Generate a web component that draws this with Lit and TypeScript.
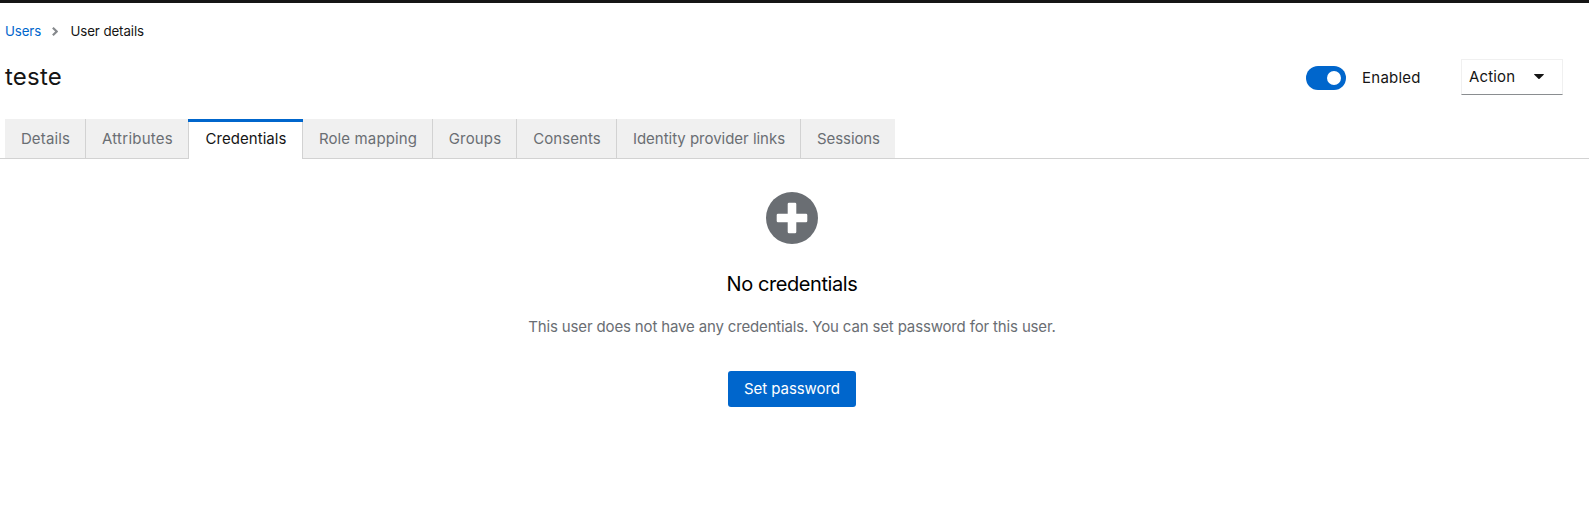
import { LitElement, html, css } from "lit";
import { customElement, state } from "lit/decorators.js";

interface Tab {
  label: string;
  width: number;
  spacing: number;
}

const TABS: Tab[] = [
  { label: "Details", width: 81, spacing: 0.15 },
  { label: "Attributes", width: 102, spacing: 0.24 },
  { label: "Credentials", width: 115, spacing: 0.04 },
  { label: "Role mapping", width: 130, spacing: 0.12 },
  { label: "Groups", width: 84, spacing: 0.15 },
  { label: "Consents", width: 100, spacing: 0.04 },
  { label: "Identity provider links", width: 184, spacing: -0.02 },
  { label: "Sessions", width: 94, spacing: -0.1 },
];

@customElement("app-root")
export class AppRoot extends LitElement {
  @state() private active = "Credentials";
  @state() private enabled = true;

  static styles = css`
    :host {
      display: block;
      box-sizing: border-box;
      height: 516px;
      overflow: hidden;
      background: #fff;
      border-top: 3px solid #151515;
      color: #151515;
      font-family: Inter, "Liberation Sans", sans-serif;
      font-size: 15px;
      font-weight: 400;
      line-height: 24px;
    }
    button {
      font: inherit;
      color: inherit;
      margin: 0;
      padding: 0;
      border: 0;
      background: none;
      white-space: nowrap;
    }
    svg { display: block; }
    .breadcrumb {
      display: flex;
      align-items: center;
      height: 20px;
      padding: 18px 0 0 5px;
      font-size: 13.3px;
      line-height: 20px;
      letter-spacing: -0.1px;
    }
    .breadcrumb a {
      width: 47px;
      color: #06c;
      text-decoration: none;
    }
    .crumb-arrow {
      width: 6px;
      height: 9px;
      margin-right: 12.5px;
      fill: #86898d;
    }
    .header {
      display: flex;
      height: 78px;
      padding-left: 5px;
    }
    h1 {
      flex: 1;
      margin: 0;
      padding-top: 20px;
      font-size: 24px;
      font-weight: 400;
      line-height: 31px;
      letter-spacing: 0.2px;
    }
    .switch {
      display: flex;
      align-items: center;
      height: 24px;
      margin-top: 25px;
      width: 155px;
      letter-spacing: 0.25px;
    }
    .track {
      box-sizing: border-box;
      width: 40px;
      height: 24px;
      padding: 5px;
      margin-right: 16px;
      border-radius: 12px;
      background: #8a8d90;
      display: flex;
    }
    .track.on {
      background: #06c;
      justify-content: flex-end;
    }
    .knob {
      width: 14px;
      height: 14px;
      border-radius: 50%;
      background: #fff;
    }
    .action {
      box-sizing: border-box;
      display: flex;
      align-items: center;
      width: 102px;
      height: 36px;
      margin: 18px 26px 0 0;
      padding: 0 18px 1px 7px;
      border: 1px solid #f0f0f0;
      border-bottom-color: #8a8d90;
      justify-content: space-between;
      letter-spacing: 0.15px;
    }
    .caret {
      width: 10px;
      height: 5px;
      fill: #151515;
    }
    .tabs {
      display: flex;
      height: 39px;
      padding-left: 5px;
      border-bottom: 1px solid #d2d2d2;
    }
    .tab {
      box-sizing: border-box;
      height: 39px;
      padding: 1px 0 0 1px;
      background: #f0f0f0;
      border-right: 1px solid #d2d2d2;
      color: #6a6e73;
    }
    .tab.before, .tab:last-child { border-right: 0; }
    .tab.active {
      height: 40px;
      display: grid;
      grid-template-rows: 3px 1fr;
      padding: 0;
      border: 0;
      background: #fff;
      color: #151515;
    }
    .accent { background: #06c; }
    .active .label {
      border: solid #d2d2d2;
      border-width: 0 1px;
      padding: 5px 0 0 1px;
    }
    .empty {
      display: flex;
      flex-direction: column;
      align-items: center;
      width: 1584px;
      padding-top: 33px;
    }
    .plus {
      width: 52px;
      height: 52px;
    }
    h2 {
      margin: 24px 0 0;
      font-size: 20px;
      font-weight: 400;
      line-height: 32px;
      letter-spacing: -0.42px;
      color: #000;
    }
    p {
      margin: 15px 0 0;
      color: #6a6e73;
      letter-spacing: -0.15px;
      white-space: nowrap;
    }
    .primary {
      width: 128px;
      height: 36px;
      margin-top: 32px;
      padding-bottom: 1px;
      border-radius: 3px;
      background: #06c;
      color: #fff;
      letter-spacing: -0.06px;
    }
  `;

  private tabClass(index: number) {
    if (TABS[index].label === this.active) return "tab active";
    return TABS[index + 1]?.label === this.active ? "tab before" : "tab";
  }

  private renderTab(tab: Tab, index: number) {
    const isActive = tab.label === this.active;
    return html`<button
      class=${this.tabClass(index)}
      role="tab"
      aria-selected=${isActive}
      style="width:${tab.width}px;letter-spacing:${tab.spacing}px"
      @click=${() => (this.active = tab.label)}
    >${isActive ? html`<span class="accent"></span>` : ""}<span class="label">${tab.label}</span></button>`;
  }

  render() {
    return html`
      <nav class="breadcrumb">
        <a href="#">Users</a>
        <svg class="crumb-arrow" viewBox="0 0 6 9"><path d="M1.6 0 5.8 4q.4.5 0 1L1.6 9 .1 7.6 3.2 4.5.1 1.4Z" /></svg>
        <span>User details</span>
      </nav>
      <header class="header">
        <h1>teste</h1>
        <div class="switch">
          <button
            class="track ${this.enabled ? "on" : ""}"
            role="switch"
            aria-label="Enabled"
            aria-checked=${this.enabled}
            @click=${() => (this.enabled = !this.enabled)}
          ><span class="knob"></span></button>
          <span>Enabled</span>
        </div>
        <button class="action">
          Action
          <svg class="caret" viewBox="0 0 10 5"><path d="M.6 0h8.8q.9.1.3.8L5.6 4.7q-.6.5-1.2 0L.3.8Q-.3.1.6 0Z" /></svg>
        </button>
      </header>
      <div class="tabs" role="tablist">${TABS.map((t, i) => this.renderTab(t, i))}</div>
      <main class="empty">
        <svg class="plus" viewBox="0 0 52 52">
          <circle cx="26" cy="26" r="26" fill="#6a6e73" />
          <path d="M23 10.7h6q1.3 0 1.3 1.3v9.7H40q1.3 0 1.3 1.3v6q0 1.3-1.3 1.3h-9.7V40q0 1.3-1.3 1.3h-6q-1.3 0-1.3-1.3v-9.7H12q-1.3 0-1.3-1.3v-6q0-1.3 1.3-1.3h9.7V12q0-1.3 1.3-1.3Z" fill="#fff" />
        </svg>
        <h2>No credentials</h2>
        <p>This user does not have any credentials. You can set password for this user.</p>
        <button class="primary">Set password</button>
      </main>
    `;
  }
}
